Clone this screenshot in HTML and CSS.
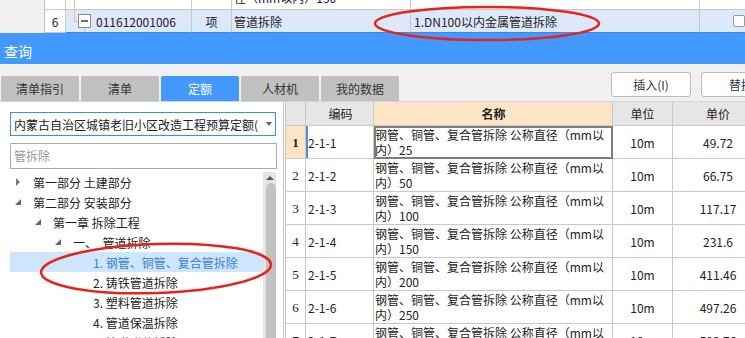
FILE: index.html
```html
<!DOCTYPE html>
<html lang="zh-CN">
<head>
    <meta charset="UTF-8">
    <meta name="viewport" content="width=device-width, initial-scale=1.0">
    <title>查询</title>
    <link rel="stylesheet" href="styles.css">
</head>
<body>
<div class="page">

    <!-- bill grid behind the dialog -->
    <div class="strip">
        <div class="strip-gutter"></div>
        <div class="strip-grid">
            <div class="srow prev">
                <div class="sc c-num"></div>
                <div class="sc c-code"><span class="tree-line"></span></div>
                <div class="sc c-unit"></div>
                <div class="sc c-name"><span class="cut-text">径（mm以内）150</span></div>
                <div class="sc c-desc"></div>
                <div class="sc c-end"></div>
            </div>
            <div class="srow cur">
                <div class="sc c-num">6</div>
                <div class="sc c-code">
                    <svg class="fold" width="27" height="22" viewBox="0 0 27 22">
                        <path d="M8.5 0V11.5H12.5" stroke="#f7c07c" fill="none"/>
                        <path d="M18.5 17.5V22" stroke="#f7c07c" fill="none"/>
                        <rect x="12.5" y="4.5" width="12" height="13" fill="#fff" stroke="#8a8a8a"/>
                        <path d="M15 11H22" stroke="#333" stroke-width="1.4"/>
                    </svg>
                    <span>011612001006</span>
                </div>
                <div class="sc c-unit">项</div>
                <div class="sc c-name">管道拆除</div>
                <div class="sc c-desc">1.DN100以内金属管道拆除</div>
                <div class="sc c-end"><span class="check"></span></div>
            </div>
        </div>
    </div>

    <div class="titlebar">查询</div>

    <div class="toolbar">
        <div class="tabs">
            <div class="tab">清单指引</div>
            <div class="tab">清单</div>
            <div class="tab active">定额</div>
            <div class="tab">人材机</div>
            <div class="tab">我的数据</div>
        </div>
        <div class="actions">
            <button class="btn">插入(I)</button>
            <button class="btn">替换</button>
        </div>
    </div>

    <div class="main">
        <aside class="side">
            <div class="select">
                <span class="select-text">内蒙古自治区城镇老旧小区改造工程预算定额(</span>
                <span class="caret"></span>
            </div>
            <div class="search">管拆除</div>
            <div class="tree-wrap">
                <ul class="tree">
                    <li class="node lv0"><span class="arrow closed"></span>第一部分 土建部分</li>
                    <li class="node lv0"><span class="arrow open"></span>第二部分 安装部分</li>
                    <li class="node lv1"><span class="arrow open"></span>第一章 拆除工程</li>
                    <li class="node lv2"><span class="arrow open"></span>一、&nbsp;&nbsp;管道拆除</li>
                    <li class="node lv3 selected"><span class="arrow"></span>1. 钢管、铜管、复合管拆除</li>
                    <li class="node lv3"><span class="arrow"></span>2. 铸铁管道拆除</li>
                    <li class="node lv3"><span class="arrow"></span>3. 塑料管道拆除</li>
                    <li class="node lv3"><span class="arrow"></span>4. 管道保温拆除</li>
                    <li class="node lv3"><span class="arrow"></span>5. 管道附件拆除</li>
                </ul>
                <div class="vscroll">
                    <span class="up"></span>
                    <div class="thumb"></div>
                </div>
            </div>
        </aside>

        <div class="quota">
            <div class="qrow head">
                <div class="qc q-num"></div>
                <div class="qc q-code center">编码</div>
                <div class="qc q-name center strong">名称</div>
                <div class="qc q-unit center">单位</div>
                <div class="qc q-price center">单价</div>
            </div>
            <div class="qrow active">
                <div class="qc q-num">1</div>
                <div class="qc q-code">2-1-1</div>
                <div class="qc q-name">钢管、铜管、复合管拆除 公称直径（mm以<br>内）25</div>
                <div class="qc q-unit center">10m</div>
                <div class="qc q-price center">49.72</div>
            </div>
            <div class="qrow">
                <div class="qc q-num">2</div>
                <div class="qc q-code">2-1-2</div>
                <div class="qc q-name">钢管、铜管、复合管拆除 公称直径（mm以<br>内）50</div>
                <div class="qc q-unit center">10m</div>
                <div class="qc q-price center">66.75</div>
            </div>
            <div class="qrow">
                <div class="qc q-num">3</div>
                <div class="qc q-code">2-1-3</div>
                <div class="qc q-name">钢管、铜管、复合管拆除 公称直径（mm以<br>内）100</div>
                <div class="qc q-unit center">10m</div>
                <div class="qc q-price center">117.17</div>
            </div>
            <div class="qrow">
                <div class="qc q-num">4</div>
                <div class="qc q-code">2-1-4</div>
                <div class="qc q-name">钢管、铜管、复合管拆除 公称直径（mm以<br>内）150</div>
                <div class="qc q-unit center">10m</div>
                <div class="qc q-price center">231.6</div>
            </div>
            <div class="qrow">
                <div class="qc q-num">5</div>
                <div class="qc q-code">2-1-5</div>
                <div class="qc q-name">钢管、铜管、复合管拆除 公称直径（mm以<br>内）200</div>
                <div class="qc q-unit center">10m</div>
                <div class="qc q-price center">411.46</div>
            </div>
            <div class="qrow">
                <div class="qc q-num">6</div>
                <div class="qc q-code">2-1-6</div>
                <div class="qc q-name">钢管、铜管、复合管拆除 公称直径（mm以<br>内）250</div>
                <div class="qc q-unit center">10m</div>
                <div class="qc q-price center">497.26</div>
            </div>
            <div class="qrow">
                <div class="qc q-num">7</div>
                <div class="qc q-code">2-1-7</div>
                <div class="qc q-name">钢管、铜管、复合管拆除 公称直径（mm以<br>内）300</div>
                <div class="qc q-unit center">10m</div>
                <div class="qc q-price center">583.76</div>
            </div>
        </div>
    </div>

    <!-- red hand-drawn marks over the screenshot -->
    <svg class="marks" width="745" height="338" viewBox="0 0 745 338">
        <ellipse cx="487" cy="23.5" rx="112" ry="16.5" fill="none" stroke="#e8231b" stroke-width="2.5"/>
        <ellipse cx="156" cy="268.5" rx="115" ry="24.5" fill="none" stroke="#e8231b" stroke-width="2.5" transform="rotate(-2 156 268.5)"/>
    </svg>
</div>
</body>
</html>
```

FILE: styles.css
```css
* {
    box-sizing: border-box;
}
body {
    margin: 0;
    font-family: "Noto Sans CJK SC", sans-serif;
    font-size: 12px;
    color: #222;
    background-color: #fff;
}
.page {
    position: relative;
    width: 745px;
    height: 338px;
    overflow: hidden;
}

/* grid strip at the top */
.strip {
    display: flex;
    height: 33px;
    background-color: #f0f0f0;
}
.strip-gutter {
    width: 44px;
    flex-shrink: 0;
}
.strip-grid {
    flex: 1;
    border-left: 1px solid #c0c0c0;
    background-color: #fff;
    overflow: hidden;
}
.srow {
    display: flex;
}
.srow.prev {
    height: 10px;
    border-bottom: 1px solid #c8c8c8;
}
.srow.cur {
    height: 23px;
}
.sc {
    flex-shrink: 0;
    display: flex;
    align-items: center;
    border-right: 1px solid #c8c8c8;
    overflow: hidden;
    white-space: nowrap;
}
.c-num {
    width: 21px;
    justify-content: center;
}
.c-code {
    width: 126px;
}
.c-unit {
    width: 40px;
    justify-content: center;
}
.c-name {
    width: 179px;
    padding-left: 2px;
}
.c-desc {
    width: 289px;
    padding-left: 3px;
}
.c-end {
    flex: 1;
    border-right: none;
}
.cur .sc {
    background-color: #dde8fb;
    border-bottom: 1px solid #3a86ee;
}
.cur .c-num {
    background-color: #fff;
    border-bottom-color: #c8c8c8;
}
.tree-line {
    align-self: stretch;
    margin-left: 8px;
    border-left: 1px solid #f7c07c;
}
.cut-text {
    align-self: flex-start;
    line-height: 14px;
    margin-top: -9px;
}
.fold {
    flex-shrink: 0;
    margin-right: 3px;
}
.check {
    width: 14px;
    height: 12px;
    margin-left: 33px;
    background-color: #fff;
    border: 1px solid #999;
    border-radius: 2px;
}

/* dialog title */
.titlebar {
    height: 31px;
    padding: 9px 0 0 4px;
    background-color: #4499fe;
    color: #fff;
    font-size: 14px;
    line-height: 18px;
}

/* tabs and buttons */
.toolbar {
    display: flex;
    height: 38px;
    background-color: #f0f0f0;
    border-bottom: 1px solid #d4d4d4;
    overflow: hidden;
}
.tabs {
    display: flex;
    gap: 2px;
    padding: 12px 0 0 1px;
    flex-shrink: 0;
}
.tab {
    width: 78px;
    height: 25px;
    display: flex;
    align-items: center;
    justify-content: center;
    background-color: #c0c0c0;
    border-radius: 2px 2px 0 0;
    color: #333;
}
.tab.active {
    background-color: #4499fe;
    color: #fff;
}
.actions {
    display: flex;
    gap: 10px;
    margin-left: 212px;
    padding-top: 8px;
    flex-shrink: 0;
}
.btn {
    width: 80px;
    height: 25px;
    padding: 0;
    background-color: #fff;
    border: 1px solid #bcbcbc;
    border-radius: 3px;
    font-family: inherit;
    font-size: 12px;
    color: #333;
}

/* body of the dialog */
.main {
    display: flex;
    height: 236px;
}
.side {
    width: 284px;
    flex-shrink: 0;
    padding: 10px 0 0 10px;
    border-right: 1px solid #c8c8c8;
    display: flex;
    flex-direction: column;
}
.select {
    width: 266px;
    height: 24px;
    display: flex;
    align-items: center;
    padding: 0 3px;
    border: 1px solid #3c8ff0;
    white-space: nowrap;
    overflow: hidden;
}
.select-text {
    flex: 1;
    overflow: hidden;
}
.caret {
    margin-left: 6px;
    border-top: 4px solid #666;
    border-left: 3px solid transparent;
    border-right: 3px solid transparent;
}
.search {
    width: 267px;
    height: 26px;
    margin-top: 7px;
    padding-left: 3px;
    line-height: 24px;
    border: 1px solid #ababab;
    color: #999;
}
.tree-wrap {
    display: flex;
    margin-top: 3px;
    flex: 1;
    overflow: hidden;
}
.tree {
    width: 253px;
    margin: 0;
    padding: 0;
    list-style: none;
}
.node {
    height: 20px;
    display: flex;
    align-items: center;
    white-space: nowrap;
}
.node.lv1 { padding-left: 20px; }
.node.lv2 { padding-left: 40px; }
.node.lv3 { padding-left: 60px; }
.node.selected {
    background-color: #cde6fb;
    color: #3b7dd8;
}
.arrow {
    width: 23px;
    height: 20px;
    flex-shrink: 0;
    position: relative;
}
.arrow.closed::before {
    content: "";
    position: absolute;
    left: 6px;
    top: 6px;
    border-left: 4px solid #777;
    border-top: 4px solid transparent;
    border-bottom: 4px solid transparent;
}
.arrow.open::before {
    content: "";
    position: absolute;
    left: 5px;
    top: 7px;
    border-bottom: 6px solid #666;
    border-left: 6px solid transparent;
}
.vscroll {
    width: 13px;
    background-color: #e4e4e4;
    display: flex;
    flex-direction: column;
    align-items: flex-end;
}
.up {
    margin: 4px 2px 0 0;
    border-bottom: 4px solid #555;
    border-left: 4px solid transparent;
    border-right: 4px solid transparent;
}
.thumb {
    width: 10px;
    flex: 1;
    margin-top: 3px;
    background-color: #c2c2c2;
    border-radius: 5px 5px 0 0;
}

/* quota table */
.quota {
    flex: 1;
    margin-left: 1px;
    border-left: 1px solid #c8c8c8;
    overflow: hidden;
}
.qrow {
    display: flex;
    height: 33px;
}
.qrow.head {
    height: 24px;
    background-color: #e6e6e6;
}
.qc {
    flex-shrink: 0;
    display: flex;
    align-items: center;
    border-right: 1px solid #c8c8c8;
    border-bottom: 1px solid #c8c8c8;
    line-height: 15px;
    white-space: nowrap;
    overflow: hidden;
}
.q-num {
    width: 20px;
    justify-content: center;
    font-family: "Liberation Serif", serif;
    font-size: 13px;
}
.q-code {
    width: 68px;
    padding-left: 2px;
}
.q-name {
    width: 239px;
    padding-left: 1px;
    line-height: 15.5px;
}
.q-unit {
    width: 60px;
}
.q-price {
    width: 90px;
    border-right: none;
}
.center {
    justify-content: center;
}
.head .q-name {
    background-color: #fde4c6;
}
.strong {
    font-weight: bold;
}
.active .q-num {
    background-color: #fde4c6;
    font-weight: bold;
}
.active .q-code {
    box-shadow: inset 2px 0 0 #4a90e2;
}
.active .q-name {
    outline: 2px solid #7d7d7d;
    outline-offset: -2px;
}

.marks {
    position: absolute;
    top: 0;
    left: 0;
    pointer-events: none;
}
```
